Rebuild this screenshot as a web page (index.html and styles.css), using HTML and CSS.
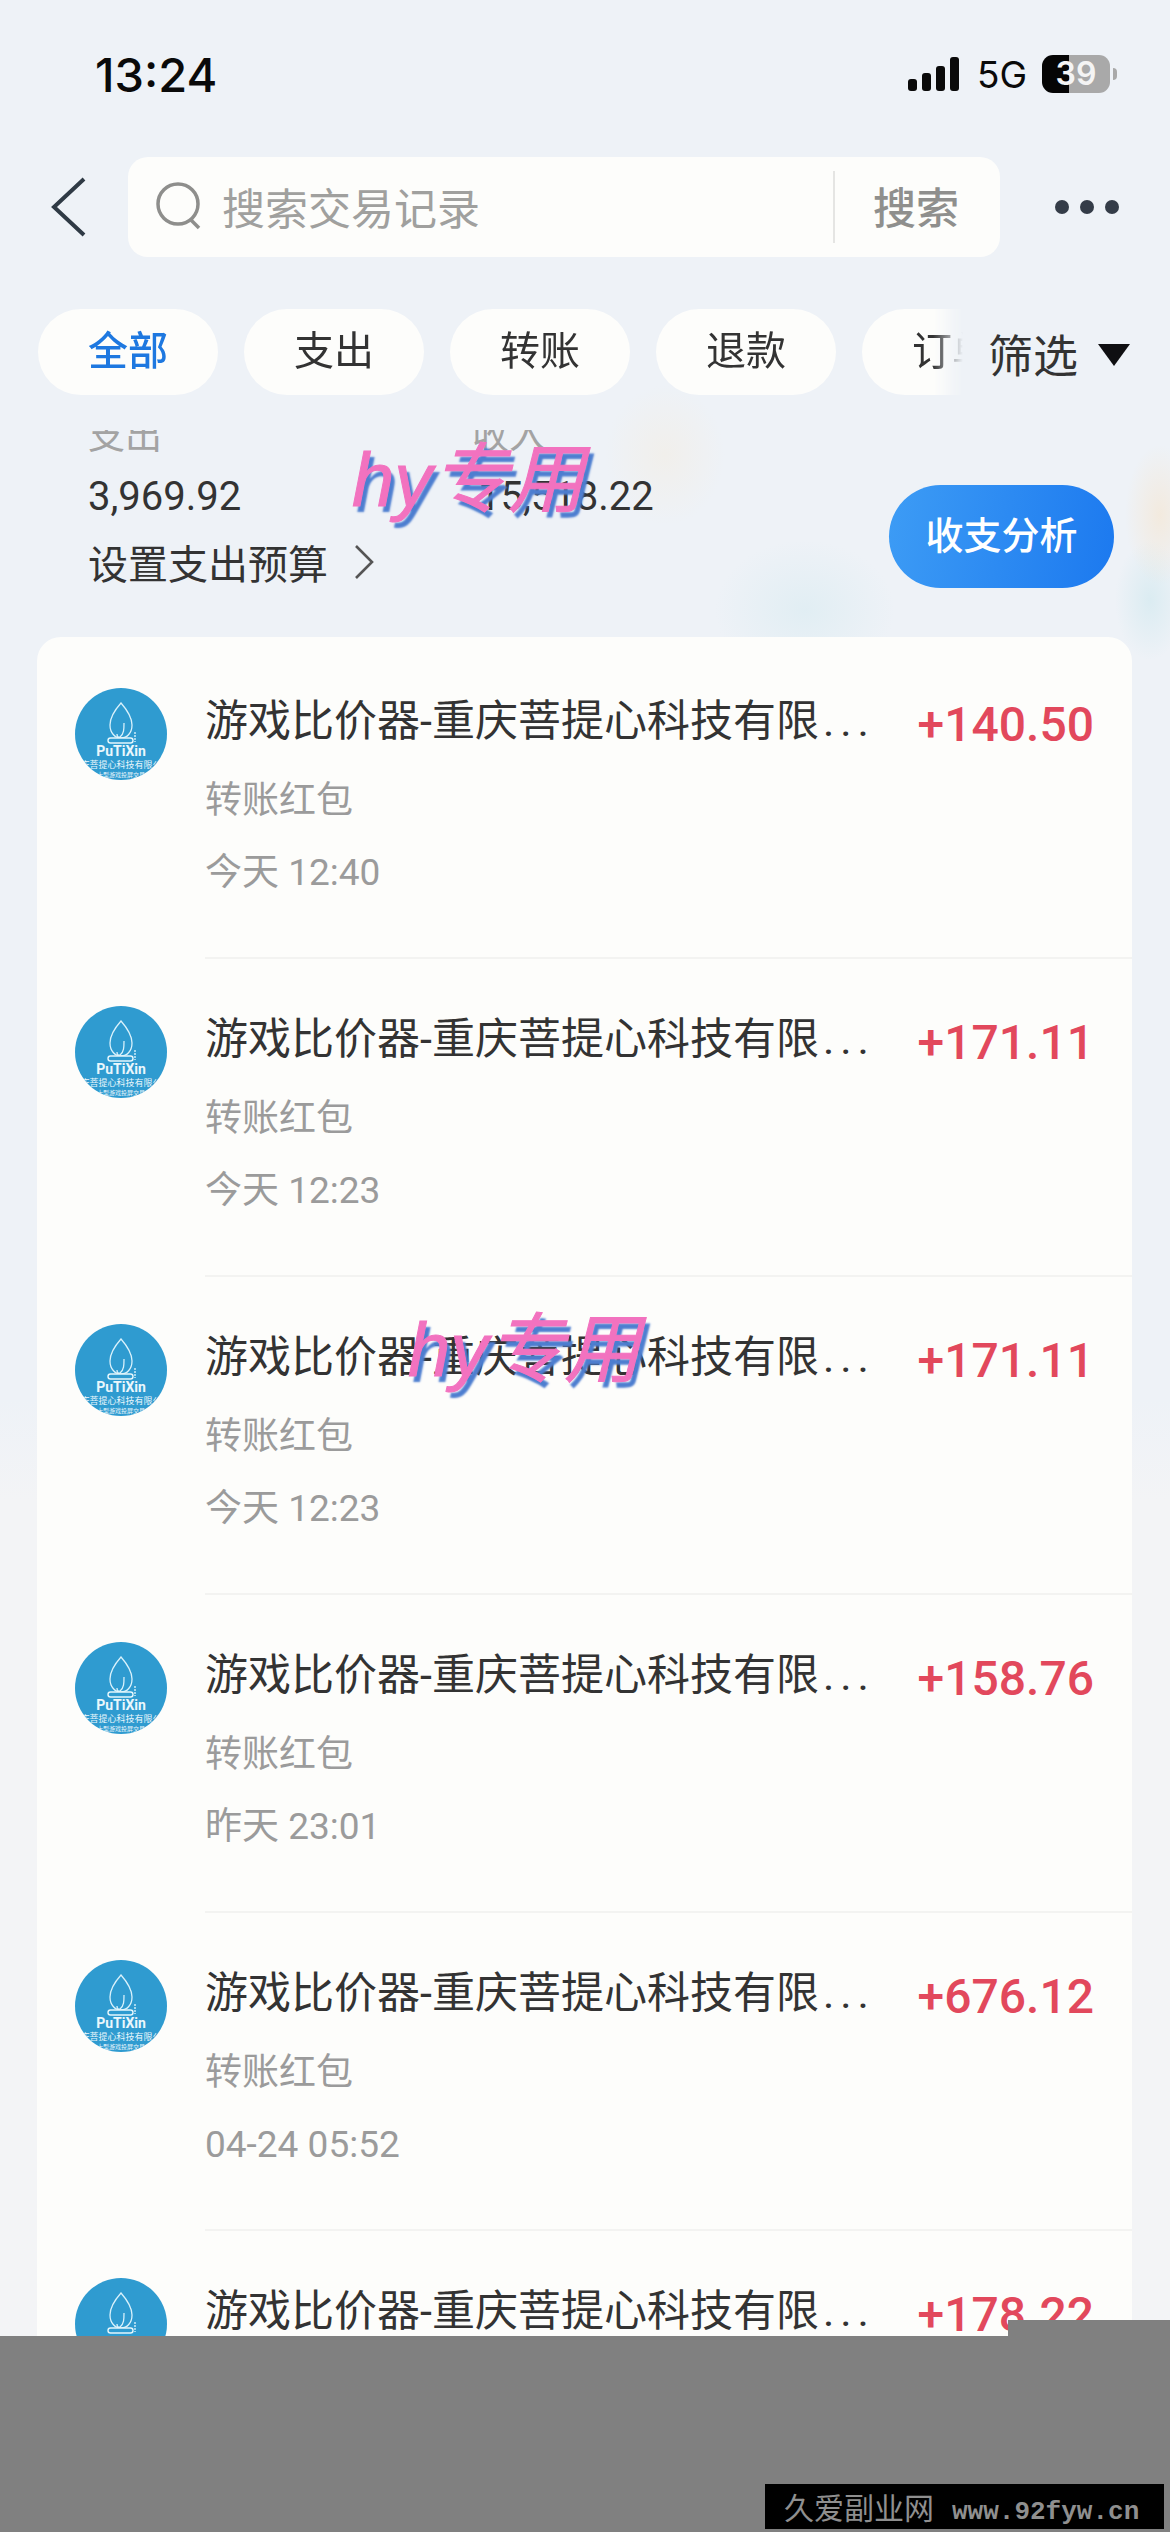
FILE: index.html
```html
<!DOCTYPE html>
<html lang="zh-CN">
<head>
  <meta charset="UTF-8" />
  <meta name="viewport" content="width=device-width, initial-scale=1.0" />
  <title>交易记录</title>
  <link rel="stylesheet" href="styles.css">
</head>
<body>
  <svg class="defs" width="0" height="0">
    <symbol id="leaf" viewBox="0 0 92 56">
      <path d="M46 15C38 24 35 30 35 37C35 45 40 50 46 50C52 50 57 45 57 37C57 30 53 23 46 15Z" fill="none" stroke="#d8f1fb" stroke-width="1.3" />
      <path d="M49 35C49 41 49 46 45 49C43 50 42 48 42 46" fill="none" stroke="#d8f1fb" stroke-width="1.3" />
      <rect x="33" y="50" width="25" height="5" rx="2.5" fill="#2f9bd0" stroke="#e4f6fc" stroke-width="1.4" />
      <path d="M60 44V54" fill="none" stroke="#d8f1fb" stroke-width="1.4" stroke-dasharray="2 1" />
    </symbol>
  </svg>

  <div class="status">
    <span class="clock">13:24</span>
    <div class="status-right">
      <span class="signal"><i class="b1"></i><i class="b2"></i><i class="b3"></i><i class="b4"></i></span>
      <span class="net">5G</span>
      <span class="battery">39</span>
      <span class="battery-tip"></span>
    </div>
  </div>

  <div class="topbar">
    <svg class="back" width="38" height="60" viewBox="0 0 38 60"><path d="M34 2L4 30L34 58" fill="none" stroke="#2f3a45" stroke-width="4" /></svg>
    <div class="search">
      <svg width="50" height="50" viewBox="0 0 50 50"><circle cx="23" cy="22" r="20" fill="none" stroke="#8e8e8c" stroke-width="3.5" /><path d="M36 38L44 46" fill="none" stroke="#8e8e8c" stroke-width="3.5" /></svg>
      <span class="search-hint">搜索交易记录</span>
      <span class="search-btn">搜索</span>
    </div>
    <div class="more"><i></i><i></i><i></i></div>
  </div>

  <div class="filters">
    <div class="tabs">
      <span class="tab active">全部</span>
      <span class="tab">支出</span>
      <span class="tab">转账</span>
      <span class="tab">退款</span>
      <span class="tab">订单</span>
    </div>
    <span class="filter-btn">筛选</span>
    <span class="filter-arrow"></span>
  </div>

  <div class="summary">
    <div class="summary-left">
      <div class="totals">
        <div class="total">
          <div class="total-label">支出</div>
          <div class="total-value">3,969.92</div>
        </div>
        <div class="total income">
          <div class="total-label">收入</div>
          <div class="total-value">15,518.22</div>
        </div>
      </div>
      <div class="budget">设置支出预算
        <svg width="22" height="36" viewBox="0 0 22 36"><path d="M3 2L19 18L3 34" fill="none" stroke="#555" stroke-width="2.6" /></svg>
      </div>
    </div>
    <div class="analysis">收支分析</div>
  </div>

  <div class="card">
    <div class="row first">
      <div class="avatar">
        <svg width="92" height="56"><use href="#leaf" /></svg>
        <span class="logo-name">PuTiXin</span>
        <span class="logo-sub">重庆菩提心科技有限公司</span>
        <span class="logo-tiny">大型游戏投屏交易</span>
      </div>
      <div class="row-body">
        <div class="row-top"><span class="row-title">游戏比价器-重庆菩提心科技有限<span class="dots">...</span></span><span class="amount">+140.50</span></div>
        <div class="row-sub">转账红包</div>
        <div class="row-time">今天 12:40</div>
      </div>
    </div>
    <div class="row">
      <div class="avatar">
        <svg width="92" height="56"><use href="#leaf" /></svg>
        <span class="logo-name">PuTiXin</span>
        <span class="logo-sub">重庆菩提心科技有限公司</span>
        <span class="logo-tiny">大型游戏投屏交易</span>
      </div>
      <div class="row-body">
        <div class="row-top"><span class="row-title">游戏比价器-重庆菩提心科技有限<span class="dots">...</span></span><span class="amount">+171.11</span></div>
        <div class="row-sub">转账红包</div>
        <div class="row-time">今天 12:23</div>
      </div>
    </div>
    <div class="row">
      <div class="avatar">
        <svg width="92" height="56"><use href="#leaf" /></svg>
        <span class="logo-name">PuTiXin</span>
        <span class="logo-sub">重庆菩提心科技有限公司</span>
        <span class="logo-tiny">大型游戏投屏交易</span>
      </div>
      <div class="row-body">
        <div class="row-top"><span class="row-title">游戏比价器-重庆菩提心科技有限<span class="dots">...</span></span><span class="amount">+171.11</span></div>
        <div class="row-sub">转账红包</div>
        <div class="row-time">今天 12:23</div>
      </div>
    </div>
    <div class="row">
      <div class="avatar">
        <svg width="92" height="56"><use href="#leaf" /></svg>
        <span class="logo-name">PuTiXin</span>
        <span class="logo-sub">重庆菩提心科技有限公司</span>
        <span class="logo-tiny">大型游戏投屏交易</span>
      </div>
      <div class="row-body">
        <div class="row-top"><span class="row-title">游戏比价器-重庆菩提心科技有限<span class="dots">...</span></span><span class="amount">+158.76</span></div>
        <div class="row-sub">转账红包</div>
        <div class="row-time">昨天 23:01</div>
      </div>
    </div>
    <div class="row">
      <div class="avatar">
        <svg width="92" height="56"><use href="#leaf" /></svg>
        <span class="logo-name">PuTiXin</span>
        <span class="logo-sub">重庆菩提心科技有限公司</span>
        <span class="logo-tiny">大型游戏投屏交易</span>
      </div>
      <div class="row-body">
        <div class="row-top"><span class="row-title">游戏比价器-重庆菩提心科技有限<span class="dots">...</span></span><span class="amount">+676.12</span></div>
        <div class="row-sub">转账红包</div>
        <div class="row-time">04-24 05:52</div>
      </div>
    </div>
    <div class="row">
      <div class="avatar">
        <svg width="92" height="56"><use href="#leaf" /></svg>
      </div>
      <div class="row-body">
        <div class="row-top"><span class="row-title">游戏比价器-重庆菩提心科技有限<span class="dots">...</span></span><span class="amount">+178.22</span></div>
      </div>
    </div>
  </div>

  <div class="mark mark-one">hy专用</div>
  <div class="mark mark-two">hy专用</div>

  <div class="cover"></div>
  <div class="cover-notch"></div>
  <div class="stamp">久爱副业网<span>www.92fyw.cn</span></div>
</body>
</html>
```

FILE: styles.css
```css
* {
  box-sizing: border-box;
}
html, body {
  margin: 0;
  height: 2532px;
}
body {
  position: relative;
  width: 1170px;
  overflow: hidden;
  font-family: Roboto, "Noto Sans CJK SC", sans-serif;
  color: #333;
  background:
    radial-gradient(ellipse 60px 70px at 665px 455px, rgba(250, 230, 200, 0.25), transparent),
    radial-gradient(ellipse 90px 70px at 805px 610px, rgba(195, 228, 235, 0.3), transparent),
    radial-gradient(ellipse 35px 70px at 1160px 515px, rgba(250, 222, 185, 0.4), transparent),
    radial-gradient(ellipse 35px 60px at 1150px 600px, rgba(195, 228, 235, 0.45), transparent),
    linear-gradient(#eef2f7 0, #eef2f7 1400px, #f3f4f6 1500px);
}
.defs {
  display: block;
  height: 0;
}

/* status bar */
.status {
  height: 148px;
  padding: 0 53px 0 95px;
  display: flex;
  align-items: center;
  justify-content: space-between;
  color: #0a0a0a;
}
.clock {
  font-family: Inter, sans-serif;
  font-size: 47px;
  font-weight: 500;
}
.status-right {
  display: flex;
  align-items: center;
}
.signal {
  display: flex;
  align-items: flex-end;
  gap: 5px;
  height: 34px;
}
.signal i {
  width: 9px;
  border-radius: 3px;
  background: #0a0a0a;
}
.b1 { height: 12px; }
.b2 { height: 18px; }
.b3 { height: 25px; }
.b4 { height: 34px; }
.net {
  margin-left: 18px;
  font-family: Inter, sans-serif;
  font-size: 37px;
  width: 65px;
}
.battery {
  width: 68px;
  height: 38px;
  border-radius: 11px;
  background: linear-gradient(to right, #050505 39%, #a9a9a9 39%);
  color: #f4f4f4;
  font-family: Inter, sans-serif;
  font-size: 32px;
  font-weight: 600;
  line-height: 38px;
  text-align: center;
}
.battery-tip {
  width: 4px;
  height: 12px;
  margin-left: 3px;
  border-radius: 0 6px 6px 0;
  background: #a9a9a9;
}

/* search */
.topbar {
  margin-top: 9px;
  padding-left: 50px;
  display: flex;
  align-items: center;
}
.back {
  flex: none;
}
.search {
  margin-left: 40px;
  width: 872px;
  height: 100px;
  padding-left: 27px;
  border-radius: 20px;
  background: #fdfdfb;
  display: flex;
  align-items: center;
}
.search-hint {
  margin-left: 17px;
  padding-bottom: 3px;
  width: 611px;
  font-size: 43px;
  color: #a0a09e;
}
.search-btn {
  width: 164px;
  height: 72px;
  border-left: 2px solid #e5e5e3;
  font-size: 43px;
  font-weight: 500;
  line-height: 76px;
  text-align: center;
  color: #8f8f8d;
}
.more {
  margin-left: 55px;
  display: flex;
  gap: 11px;
}
.more i {
  width: 14px;
  height: 14px;
  border-radius: 50%;
  background: #343c48;
}

/* filter tabs */
.filters {
  margin-top: 52px;
  padding-left: 38px;
  display: flex;
  align-items: center;
}
.tabs {
  width: 937px;
  display: flex;
  gap: 26px;
  overflow: hidden;
  -webkit-mask-image: linear-gradient(to right, #000 895px, transparent 925px);
  mask-image: linear-gradient(to right, #000 895px, transparent 925px);
}
.tab {
  flex: none;
  width: 180px;
  height: 86px;
  border-radius: 43px;
  background: #fdfdfb;
  font-size: 40px;
  line-height: 86px;
  text-align: center;
}
.tab.active {
  color: #1e78e0;
  font-weight: 500;
}
.filter-btn {
  margin-left: 13px;
  padding-top: 2px;
  font-size: 45px;
}
.filter-arrow {
  margin: 5px 0 0 20px;
  border-left: 16px solid transparent;
  border-right: 16px solid transparent;
  border-top: 22px solid #0f0f12;
}

/* totals */
.summary {
  margin-top: 35px;
  height: 207px;
  padding: 0 56px 0 88px;
  overflow: hidden;
  display: flex;
  justify-content: space-between;
}
.summary-left {
  margin-top: -17px;
}
.totals {
  display: flex;
}
.total {
  width: 384px;
}
.total-label {
  height: 48px;
  font-size: 37px;
  line-height: 48px;
  color: #a3a3a3;
}
.total-value {
  margin-top: 10px;
  height: 52px;
  font-size: 40px;
  line-height: 52px;
}
.income .total-value {
  margin-left: 6px;
}
.budget {
  margin-top: 11px;
  height: 56px;
  display: flex;
  align-items: center;
  gap: 25px;
  font-size: 40px;
}
.analysis {
  margin-top: 55px;
  width: 225px;
  height: 103px;
  border-radius: 52px;
  background: linear-gradient(100deg, #3d9cf5, #1c79ef);
  color: #fff;
  font-size: 38px;
  font-weight: 500;
  line-height: 103px;
  text-align: center;
}

/* records */
.card {
  margin: 0 38px 0 37px;
  padding-top: 2px;
  height: 1900px;
  border-radius: 24px;
  background: #fdfdfb;
}
.row {
  height: 318px;
  padding-left: 38px;
  display: flex;
}
.avatar {
  flex: none;
  width: 92px;
  height: 92px;
  margin-top: 49px;
  border-radius: 50%;
  overflow: hidden;
  background: #2f9bd0;
  display: flex;
  flex-direction: column;
  align-items: center;
  color: #eaf7fc;
}
.avatar svg {
  flex: none;
  display: block;
}
.avatar span {
  flex: none;
  white-space: nowrap;
}
.logo-name {
  font-size: 14px;
  font-weight: 700;
  line-height: 15px;
}
.logo-sub {
  font-size: 9px;
  line-height: 11px;
  margin-top: 1px;
}
.logo-tiny {
  font-size: 6px;
  line-height: 8px;
}
.row-body {
  margin-left: 38px;
  flex: 1;
  padding: 52px 38px 0 0;
  border-top: 2px solid #f3f3f1;
}
.first .row-body {
  border-top-color: transparent;
}
.row-top {
  height: 56px;
  display: flex;
  align-items: center;
  justify-content: space-between;
}
.row-title {
  margin-bottom: 8px;
  font-size: 43px;
  white-space: nowrap;
}
.dots {
  letter-spacing: 6px;
  margin-left: 4px;
}
.amount {
  margin-top: 6px;
  font-size: 48px;
  font-weight: 500;
  color: #e2485c;
}
.row-sub, .row-time {
  height: 48px;
  font-size: 37px;
  line-height: 48px;
  color: #9b9b9b;
}
.row-sub {
  margin-top: 28px;
}
.row-time {
  margin-top: 24px;
}

/* stuff pasted on top of the screenshot */
.mark {
  position: absolute;
  font-family: "Liberation Sans", "Noto Sans CJK SC", sans-serif;
  font-size: 76px;
  font-style: italic;
  line-height: 100px;
  color: #f272bf;
  -webkit-text-stroke: 1px #f272bf;
  text-shadow: 4px 6px 2px #4d7ed0;
}
.mark-one {
  left: 352px;
  top: 430px;
}
.mark-two {
  left: 408px;
  top: 1300px;
}
.cover {
  position: absolute;
  left: 0;
  right: 0;
  top: 2336px;
  bottom: 0;
  background: #808080;
}
.cover-notch {
  position: absolute;
  left: 1008px;
  right: 0;
  top: 2320px;
  height: 16px;
  background: #808080;
}
.stamp {
  position: absolute;
  left: 765px;
  top: 2484px;
  width: 399px;
  height: 45px;
  background: #000;
  color: #8f8f8f;
  font-family: "Noto Sans CJK SC", sans-serif;
  font-size: 30px;
  line-height: 45px;
  padding-left: 19px;
  white-space: nowrap;
}
.stamp span {
  margin-left: 18px;
  font-family: "Liberation Mono", monospace;
  font-size: 26px;
  font-weight: 700;
}
```
